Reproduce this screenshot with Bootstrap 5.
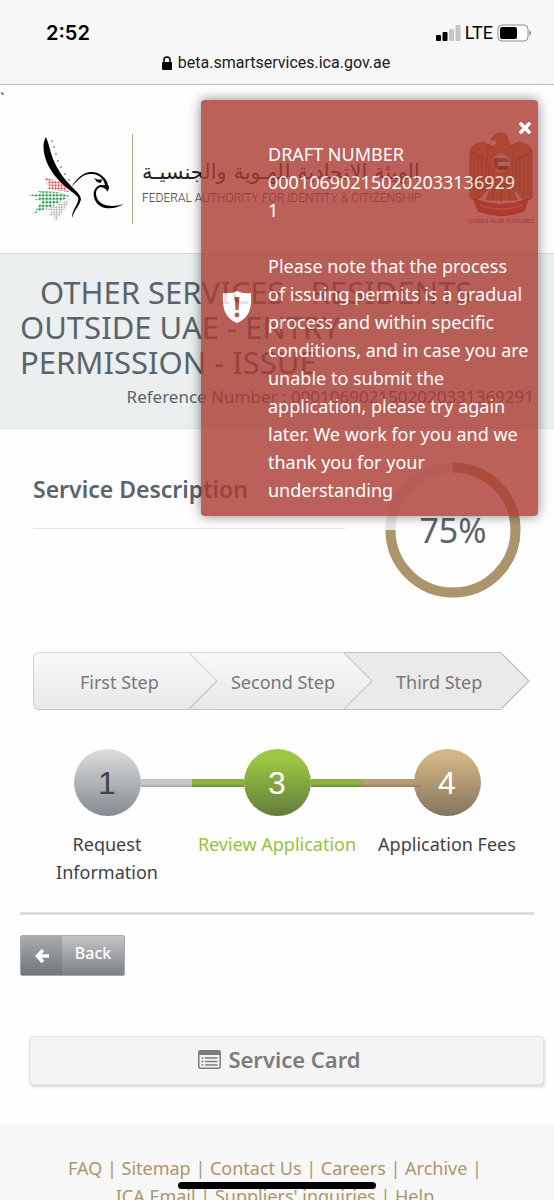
<!DOCTYPE html>
<html lang="en">
<head>
<meta charset="utf-8">
<meta name="viewport" content="width=device-width, initial-scale=1">
<title>Smart Services</title>
<link href="https://cdn.jsdelivr.net/npm/bootstrap@5.3.0/dist/css/bootstrap.min.css" rel="stylesheet">
<style>
  body { font-family: "Noto Sans", "Open Sans", sans-serif; font-size: 18px; line-height: 28px; color: #3f4145; background: #fefefe; }
  a { text-decoration: none; }
  svg { display: block; flex: none; }

  .phone-bar { height: 85px; background: #f7f7f7; border-bottom: 1px solid #bdbdbd; color: #000; padding: 19px 22px 0 46px; font-family: Inter, sans-serif; }
  .clock { font-size: 20px; font-weight: 600; }
  .signal-row { font-family: Roboto, sans-serif; font-size: 18px; gap: 4px; }
  .address { font-family: Roboto, sans-serif; font-size: 16px; line-height: 32px; padding-right: 26px; gap: 6px; color: #1b1b1b; }

  .stray { font-size: 16px; line-height: 28px; height: 28px; }
  .brand-bar { height: 169px; border-bottom: 1px solid #d8dcdd; }
  .brand-row { padding: 0 20px 0 29px; height: 108px; align-items: center; margin-top: 12px; }
  .brand-rule { width: 1px; height: 90px; background: #b9a78c; margin: 0 9px 0 7px; }
  .brand-name { padding-top: 10px; }
  .brand-ar { font-family: "DejaVu Sans", sans-serif; font-size: 21px; line-height: 28px; color: #222; text-align: right; }
  .brand-en { font-family: Roboto, sans-serif; font-weight: 300; font-size: 12px; line-height: 24px; color: #333; }
  .emblem { font-family: "Liberation Sans", sans-serif; font-size: 7px; line-height: 10px; color: #6b5a55; }

  .heading-band { background: #ebeff0; border-bottom: 1px solid #dfe2e3; padding: 21px 20px 17px; color: #5b646b; }
  .heading-band h1 { font-size: 31px; font-weight: 400; line-height: 35px; text-indent: 20px; margin: 0; }
  .ref-no { font-size: 17px; line-height: 28px; padding-top: 3px; }

  .desc-row { padding: 33px 33px 0; }
  .desc-row h2 { font-size: 23px; font-weight: 600; line-height: 32px; color: #5b646b; margin: 11px 0 23px; }
  .desc-rule { border-top: 1px solid #e4e4e4; }
  .ring-box { width: 136px; height: 136px; margin-left: 40px; }
  .ring-box span { font-size: 34px; color: #5b646b; }

  .arrows { margin: 54px 24px 0 33px; height: 58px; }
  .arrow-step { display: flex; align-items: center; justify-content: center; color: #77787a; border-top: 1px solid #dadada; border-bottom: 1px solid #c4c4c4; background: linear-gradient(#f9f9f9, #e8e8e8); padding: 2px 0 0 4px; white-space: nowrap; min-width: 0; }
  .arrow-first { flex: 139 1 0; border-left: 1px solid #d0d0d0; border-radius: 6px 0 0 6px; padding-left: 16px; }
  .arrow-second { flex: 123 1 0; }
  .arrow-third { flex: 124 1 0; background: #eaeaea; border-color: #c0c0c0; }

  .track { margin: 39px 22px 0; }
  .stage { flex: 1 1 0; text-align: center; min-width: 0; }
  .stage-line { flex: 1; height: 8px; }
  .stage-dot { width: 67px; height: 67px; border-radius: 50%; font-family: "Liberation Sans", sans-serif; font-size: 32px; color: #fff; flex: none; }
  .dot-grey { background: linear-gradient(#dcdddd, #858a92); color: #444; }
  .dot-green { background: linear-gradient(#9cc644 15%, #627d3c); }
  .dot-tan { background: linear-gradient(#d3b685 10%, #84745f); }
  .line-grey { background: linear-gradient(#c6c7ca 60%, #a2a4a9); }
  .line-green { background: linear-gradient(#8bb33e 60%, #6b8a3b); }
  .line-tan { background: linear-gradient(#b99b74 60%, #93805f); margin-right: -8px; z-index: 1; }
  .line-end { margin-left: -8px; }
  .stage-label { margin-top: 14px; }
  .label-green { color: #97c23d; }

  .divider { margin: 26px 20px 20px; border-top: 3px solid #dcdcdc; }
  .back-btn { display: flex; border: 1px solid #a6a8aa; border-radius: 2px; padding: 0; margin-left: 20px; height: 41px; width: 105px; color: #fff; background: linear-gradient(#c3c4c5, #7c8187); font-size: 16px; font-weight: 500; line-height: 34px; overflow: hidden; }
  .back-btn .glyph { width: 41px; background: rgba(70, 75, 80, .2); display: flex; align-items: center; justify-content: center; }
  .card-btn { display: flex; align-items: center; justify-content: center; gap: 7px; margin: 60px 10px 39px 29px; height: 49px; padding: 0 14px 3px 0; border: 1px solid #e2e2e2; border-radius: 4px; background: #f4f4f4; color: #7c7c7c; font-size: 22px; font-weight: 600; box-shadow: 1px 2px 3px rgba(0, 0, 0, .15); }

  .site-footer { background: #f7f7f7; padding: 30px 62px 20px 58px; color: #ab966d; flex: 1 0 auto; display: flex; flex-direction: column; align-items: center; font-size: 18px; }
  .site-footer a { color: #ab966d; }

  .notice { position: absolute; top: 100px; right: 16px; width: 337px; padding: 40px 8px 12px 67px; border-radius: 4px; background: #ab3b32; color: #fff; opacity: .8; box-shadow: 0 0 12px rgba(0, 0, 0, .6); font-size: 18px; white-space: nowrap; z-index: 5; }
  .notice p { margin: 0; }
  .notice-icon { position: absolute; left: 20px; top: 50%; margin-top: -18px; }
  .notice-close { position: absolute; right: 7px; top: 22px; padding: 0; border: 0; background: none; }
  .home-pill { position: absolute; bottom: 11px; left: 50%; width: 198px; height: 7px; margin-left: -99px; border-radius: 4px; background: #000; }
</style>
</head>
<body>
<div class="vh-100 overflow-hidden position-relative d-flex flex-column">
  <header class="phone-bar flex-shrink-0">
    <div class="d-flex justify-content-between align-items-center">
      <span class="clock">2:52</span>
      <span class="signal-row d-flex align-items-center">
        <svg width="25" height="16" viewBox="0 0 25 16"><rect y="10" width="5" height="6" rx="1"/><rect x="6.500" y="7" width="5" height="9" rx="1"/><rect x="13" y="4" width="5" height="12" rx="1" fill="#c6c6c6"/><rect x="19.500" y="0" width="5" height="16" rx="1" fill="#c6c6c6"/></svg>
        <span>LTE</span>
        <svg width="35" height="18" viewBox="0 0 35 18"><rect x="1" y="1" width="30" height="16" rx="4" fill="#fff" stroke="#8c8c8c"/><rect x="3" y="3" width="17" height="12" rx="2"/><path d="M32.500 6q3 3 0 6z" fill="#777"/></svg>
      </span>
    </div>
    <div class="address d-flex align-items-center justify-content-center">
      <svg width="10" height="14" viewBox="0 0 10 14"><rect y="6" width="10" height="8" rx="1"/><path d="M2 7V4a3 3 0 0 1 6 0v3" fill="none" stroke="#000" stroke-width="1.500"/></svg>
      <span>beta.smartservices.ica.gov.ae</span>
    </div>
  </header>

  <div class="brand-bar flex-shrink-0">
    <div class="stray">`</div>
    <div class="d-flex brand-row">
      <svg width="96" height="92" viewBox="26 132 96 92">
        <defs>
          <pattern id="dr" width="3" height="3" patternUnits="userSpaceOnUse"><circle cx="1.500" cy="1.500" r="1.150" fill="#e04c50"/></pattern>
          <pattern id="dg" width="3.500" height="3.500" patternUnits="userSpaceOnUse"><circle cx="1.700" cy="1.700" r="1.350" fill="#269450"/></pattern>
          <pattern id="dk" width="2.500" height="2.500" patternUnits="userSpaceOnUse"><circle cx="1.200" cy="1.200" r=".8" fill="#8f8792"/></pattern>
        </defs>
        <path d="M66 191L58 181 40 176l5 5-2 2 4 2-3 3z" fill="url(#dr)"/>
        <path d="M67 195L55 191 35 190l4 3-14 1 12 3-6 2 8 1-9 13 20-8z" fill="url(#dg)"/>
        <path d="M67 198L42 209l7 0-3 6 5-1 1 7 9-12z" fill="url(#dk)"/>
        <path d="M43 136C39 142 40 153 45 164C51 176 61 185 69 191C74 195 76 196 75 200C73 206 69 210 69 217C72 208 77 204 78 198C77 193 73 190 68 185C60 177 54 168 50 158C47 150 46 143 43 136Z"/>
        <path d="M68 187C74 176 82 170 90 171C98 172 104 178 105 184C107 186 106 188 104 191C104 188 101 187 98 186C92 187 92 194 95 199C100 206 111 206 121 203C111 209 98 209 93 201C89 194 90 187 97 184L102 184C101 178 96 173 89 173C81 172 75 178 68 187Z"/>
        <path d="M91 177q5 3 8 1l-1 4-4-1z"/>
        <g fill="#a98c5b"><circle cx="49" cy="140" r="1"/><circle cx="51" cy="146" r="1"/><circle cx="53" cy="153" r="1"/><circle cx="55" cy="160" r="1"/><circle cx="58" cy="166" r="1"/><circle cx="62" cy="173" r="1"/><circle cx="66" cy="179" r="1"/></g>
      </svg>
      <div class="brand-rule"></div>
      <div class="brand-name text-nowrap d-flex flex-column align-items-start">
        <div class="brand-ar" lang="ar" dir="rtl">الهيئة الاتحادية للهـوية والجنسيـة</div>
        <div class="brand-en">FEDERAL AUTHORITY FOR IDENTITY &amp; CITIZENSHIP</div>
      </div>
      <div class="emblem ms-auto text-nowrap d-flex flex-column align-items-center">
        <svg width="64" height="84" viewBox="0 0 64 84">
          <g fill="#b07a3a" stroke="#6d4420" stroke-width=".8">
            <path d="M25 15L14 10Q2 13 1 19L1 66l6 3 4-3 5-6 9-8V34zM39 15l11-5q12 3 13 9l0 47-6 3-4-3-5-6-9-8V34z"/>
            <path d="M22 8q4-7 10-7 6 0 7 7 1 6 6 9l-2 33-6 12H25l-5-12-2-33q10-3 11-8-4-2-7-1z"/>
            <path d="M23 52h19l6 16H17z"/>
          </g>
          <g fill="none" stroke="#5c3820" stroke-width=".9"><path d="M5 22v42M9 23v41M13 25v35M17 27v30M59 22v42M55 23v41M51 25v35M47 27v30M27 54l-4 14M32 54v16M38 54l4 14M2 20l16 7M62 20l-15 7"/></g>
          <circle cx="32" cy="31" r="11" fill="#c9a46a" stroke="#6d4420"/><circle cx="32" cy="31" r="8.500" fill="#eee"/><path d="M25 26h4v11h-3q-3-5-1-11z" fill="#c8202c"/><path d="M29 26h9l2 4H29z" fill="#17834b"/><path d="M29 34h11l-2 4h-9z" fill="#222"/>
          <path d="M5 67q27 11 54 0l-4 12q-23 9-46 0z" fill="#c93a32" stroke="#7a2b22"/><path d="M11 73q21 8 42 0" fill="none" stroke="#eacb98" stroke-width="1.500" stroke-dasharray="3 1"/>
        </svg>
        <span>United Arab Emirates</span>
      </div>
    </div>
  </div>

  <section class="heading-band flex-shrink-0">
    <h1>OTHER SERVICES - RESIDENTS<br>OUTSIDE UAE - ENTRY<br>PERMISSION - ISSUE</h1>
    <div class="ref-no text-end">Reference Number : 0001069021502020331369291</div>
  </section>

  <main class="flex-shrink-0">
    <section class="desc-row d-flex">
      <div class="flex-grow-1">
        <h2>Service Description</h2>
        <div class="desc-rule"></div>
      </div>
      <div class="ring-box position-relative d-flex align-items-center justify-content-center flex-shrink-0">
        <svg class="position-absolute top-0 start-0" width="136" height="136" viewBox="0 0 136 136" fill="none" stroke-width="10"><circle cx="68" cy="68" r="62.500" stroke="#e6e6e6"/><path d="M68 5.500A62.500 62.500 0 1 1 5.500 68" stroke="#ac956a"/></svg>
        <span>75%</span>
      </div>
    </section>

    <nav class="arrows d-flex" aria-label="Steps">
      <a href="#" class="arrow-step arrow-first">First Step</a>
      <svg width="29" height="58" viewBox="0 0 29 58"><defs><linearGradient id="soft" x2="0" y2="1"><stop stop-color="#f9f9f9"/><stop offset="1" stop-color="#e8e8e8"/></linearGradient></defs><path d="M0 0h29v58H0z" fill="url(#soft)"/><path d="M0 .5h29" stroke="#dadada"/><path d="M0 57.500h29" stroke="#c4c4c4"/><path d="M0 1l28 28" stroke="#dcdcdc" stroke-width="1.500"/><path d="M28 29L0 57" stroke="#c6c6c6" stroke-width="1.500"/></svg>
      <a href="#" class="arrow-step arrow-second">Second Step</a>
      <svg width="29" height="58" viewBox="0 0 29 58"><path d="M0 0h29v58H0z" fill="#eaeaea"/><path d="M0 0l28 29L0 58z" fill="url(#soft)"/><path d="M0 .5h29M0 57.500h29" stroke="#c0c0c0"/><path d="M0 1l28 28L0 57" fill="none" stroke="#cfcfcf" stroke-width="1.500"/></svg>
      <a href="#" class="arrow-step arrow-third">Third Step</a>
      <svg width="29" height="58" viewBox="0 0 29 58"><path d="M0 .5L28 29 0 57.500z" fill="#eaeaea"/><path d="M0 1l28 28L0 57" fill="none" stroke="#c2c2c2" stroke-width="1.500"/></svg>
    </nav>

    <section class="track d-flex">
      <div class="stage">
        <div class="d-flex align-items-center"><div class="stage-line"></div><div class="stage-dot dot-grey d-flex align-items-center justify-content-center">1</div><div class="stage-line line-grey"></div></div>
        <div class="stage-label">Request<br>Information</div>
      </div>
      <div class="stage">
        <div class="d-flex align-items-center"><div class="stage-line line-green"></div><div class="stage-dot dot-green d-flex align-items-center justify-content-center">3</div><div class="stage-line line-green"></div></div>
        <div class="stage-label label-green text-nowrap">Review Application</div>
      </div>
      <div class="stage">
        <div class="d-flex align-items-center"><div class="stage-line line-tan"></div><div class="stage-dot dot-tan d-flex align-items-center justify-content-center">4</div><div class="stage-line line-end"></div></div>
        <div class="stage-label text-nowrap">Application Fees</div>
      </div>
    </section>

    <div class="divider"></div>
    <button type="button" class="back-btn">
      <span class="glyph align-self-stretch"><svg width="14" height="14" viewBox="0 0 14 14" fill="none" stroke="#fff" stroke-width="3.600"><path d="M8 1L2.500 7 8 13M3 7h11"/></svg></span>
      <span class="flex-grow-1">Back</span>
    </button>
    <a href="#" class="card-btn">
      <svg width="23" height="19" viewBox="0 0 23 19"><rect x=".8" y=".8" width="21.400" height="17.400" rx="1.500" fill="none" stroke="#7c7c7c" stroke-width="1.500"/><path d="M1 1h21v4H1z" fill="#7c7c7c"/><path d="M3.500 8h2M3.500 11.500h2M3.500 15h2M7 8h12.500M7 11.500h12.500M7 15h12.500" stroke="#7c7c7c" stroke-width="1.300"/></svg>
      <span>Service Card</span>
    </a>
  </main>

  <footer class="site-footer">
    <div class="text-nowrap"><a href="#">FAQ</a> | <a href="#">Sitemap</a> | <a href="#">Contact Us</a> | <a href="#">Careers</a> | <a href="#">Archive</a> |</div>
    <div class="text-nowrap"><a href="#">ICA Email</a> | <a href="#">Suppliers' inquiries</a> | <a href="#">Help</a></div>
  </footer>

  <div class="notice" role="alert">
    <button type="button" class="notice-close" aria-label="Close"><svg width="12" height="12" viewBox="0 0 12 12"><path d="M2 2l8 8M10 2l-8 8" stroke="#fff" stroke-width="3.600" stroke-linecap="square"/></svg></button>
    <svg class="notice-icon" width="32" height="34" viewBox="0 0 32 34"><path d="M16 1q6 3 14 2 1 11-2 19-4 8-12 11Q8 30 4 22 1 14 2 3q8 1 14-2z" fill="#fff"/><path d="M13.500 7h5l-1 13h-3z" fill="#ab3b32"/><circle cx="16" cy="25" r="2.400" fill="#ab3b32"/></svg>
    <p>DRAFT NUMBER<br>000106902150202033136929<br>1</p>
    <br>
    <p>Please note that the process<br>of issuing permits is a gradual<br>process and within specific<br>conditions, and in case you are<br>unable to submit the<br>application, please try again<br>later. We work for you and we<br>thank you for your<br>understanding</p>
  </div>
  <div class="home-pill"></div>
</div>
<script src="https://cdn.jsdelivr.net/npm/bootstrap@5.3.0/dist/js/bootstrap.bundle.min.js"></script>
</body>
</html>
